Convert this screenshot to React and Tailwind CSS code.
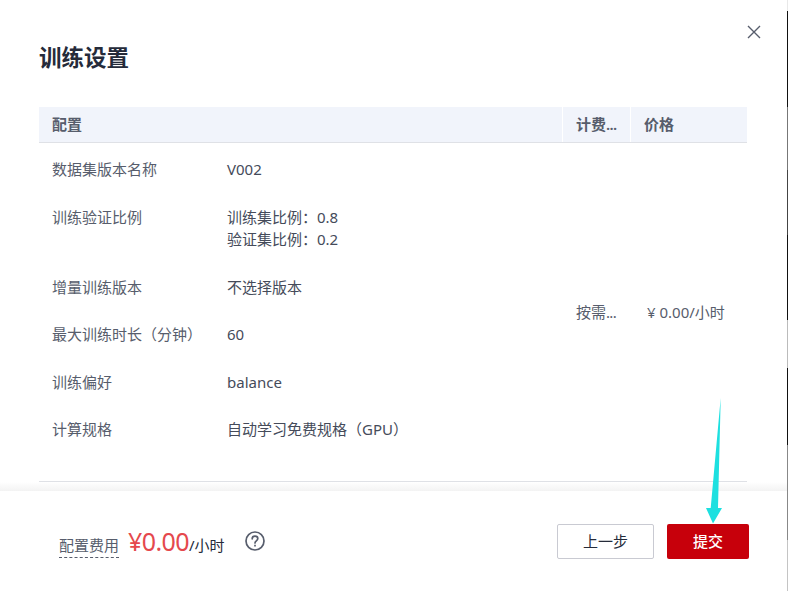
const ROWS = [
  { label: '数据集版本名称', value: ['V002'] },
  { label: '训练验证比例', value: ['训练集比例：0.8', '验证集比例：0.2'] },
  { label: '增量训练版本', value: ['不选择版本'] },
  { label: '最大训练时长（分钟）', value: ['60'] },
  { label: '训练偏好', value: ['balance'] },
  { label: '计算规格', value: ['自动学习免费规格（GPU）'] },
];

// 1px sliver of whatever sat behind the dialog
const EDGE = [
  { h: 'h-[11px]', c: 'bg-[#e8e8e8]' },
  { h: 'h-[96px]', c: 'bg-[#111111]' },
  { h: 'h-[63px]', c: 'bg-[#777777]' },
  { h: 'h-[65px]', c: 'bg-[#444444]' },
  { h: 'h-[85px]', c: 'bg-[#111111]' },
  { h: 'h-[48px]', c: 'bg-[#bbbbbb]' },
  { h: 'h-[77px]', c: 'bg-[#111111]' },
  { h: 'h-[95px]', c: 'bg-[#888888]' },
  { h: 'h-[51px]', c: 'bg-[#c4c4c4]' },
];

export default function App() {
  return (
    <div className="relative flex h-[591px] w-[788px] overflow-hidden bg-white font-['Noto_Sans','Noto_Sans_CJK_SC',sans-serif] text-[15px] text-[#252b3a]">
      <div className="flex w-[787px] flex-col">
        {/* Header */}
        <div className="relative h-[107px] shrink-0 pl-[39px] pt-[41px]">
          <h1 className="text-[22.5px] font-semibold leading-[33px] text-[#252b3a]">训练设置</h1>
          <button className="absolute right-[26px] top-[25px] text-[#575d6c]">
            <svg width="14" height="14" viewBox="0 0 14 14" fill="none" stroke="currentColor" strokeWidth="1.4">
              <path d="M1 1l12 12M13 1L1 13" />
            </svg>
          </button>
        </div>

        {/* Table */}
        <div className="mx-[39px] w-[708px] shrink-0">
          <div className="flex h-9 border-b border-[#dfe1e6] bg-[#f1f4fb] font-semibold leading-[35px] text-[#575d6c]">
            <div className="w-[523px] pl-[13px]">配置</div>
            <div className="w-[68px] border-l border-white pl-[13px]">计费<span className="tracking-[-0.7px]">...</span></div>
            <div className="flex-1 border-l border-white pl-[13px]">价格</div>
          </div>
          <div className="flex h-[339px] border-b border-[#dfe1e6]">
            <div className="flex w-[523px] flex-col gap-[25.6px] pl-[13px] pt-[14.5px] leading-[22px]">
              {ROWS.map((row) => (
                <div key={row.label} className="flex first:mb-px">
                  <div className="w-[175px] text-[#575d6c]">{row.label}</div>
                  <div className="text-[#454b5a]">
                    {row.value.map((line) => (
                      <div key={line}>{line}</div>
                    ))}
                  </div>
                </div>
              ))}
            </div>
            <div className="flex w-[68px] items-center pl-[14px] text-[#575d6c]">按需<span className="tracking-[-0.7px]">...</span></div>
            <div className="flex flex-1 items-center pl-[17px] text-[#575d6c]">¥ 0.00/小时</div>
          </div>
        </div>

        <div className="h-[9px] shrink-0 bg-gradient-to-b from-white to-[#f3f3f3]" />

        {/* Footer */}
        <div className="flex flex-1 items-center justify-between pl-[59px] pr-[38px]">
          <div className="flex items-center">
            <span className="mt-[9px] border-b border-dashed border-[#575d6c] leading-[24px] text-[#575d6c]">配置费用</span>
            <span className="ml-[9px] text-[25px] leading-[40px] tracking-[-0.6px] text-[#e5484d]">¥0.00</span>
            <span className="mt-[8px]">/小时</span>
            <svg className="ml-[20px]" width="20" height="20" viewBox="0 0 20 20" fill="none" stroke="#575d6c" strokeWidth="1.7">
              <circle cx="10" cy="10" r="9" />
              <path d="M7.2 7.8c0-1.7 1.2-2.6 2.8-2.6s2.8 1 2.8 2.4c0 2.2-2.8 2.2-2.8 4.3" strokeLinecap="round" />
              <path d="M10 13.8v1.6" />
            </svg>
          </div>
          <div className="flex gap-[13px]">
            <button className="h-[35px] w-[97px] rounded-[2px] border border-[#c9cad2]">上一步</button>
            <button className="h-[35px] w-[82px] rounded-[2px] bg-[#c7000b] font-medium text-white">提交</button>
          </div>
        </div>
      </div>

      <div className="flex w-px flex-col">
        {EDGE.map((seg, i) => (
          <div key={i} className={`${seg.h} ${seg.c}`} />
        ))}
      </div>

      {/* Annotation arrow over the submit button */}
      <svg className="absolute left-[700px] top-[395px]" width="30" height="132" viewBox="0 0 30 132">
        <path d="M20.7 3L18 113H22L13 128.5L6 113H10.7Z" fill="#1de0e0" />
      </svg>
    </div>
  );
}
